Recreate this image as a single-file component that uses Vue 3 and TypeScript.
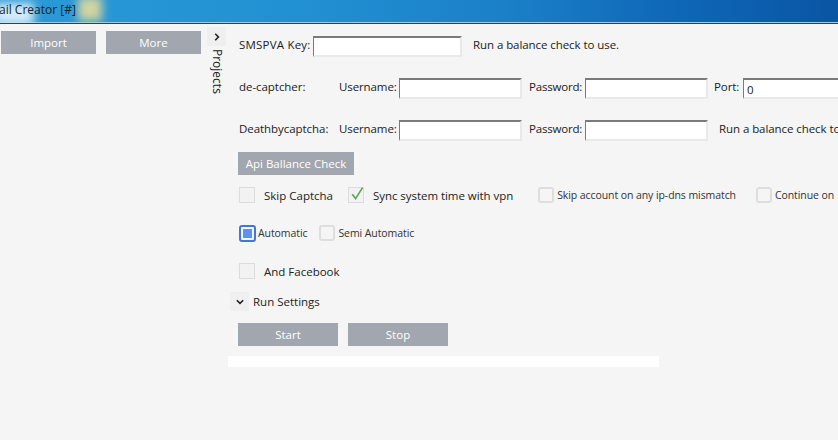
<script setup lang="ts">
const nothing: string[] = []
void nothing
</script>

<template>
  <div class="window">
    <header class="titlebar">
      <span class="glow glow-a"></span>
      <span class="glow glow-b"></span>
      <span class="title">ail Creator [#]</span>
    </header>
    <div class="body">
      <aside class="side">
        <div class="side-buttons">
          <button class="btn side-btn">Import</button>
          <button class="btn side-btn">More</button>
        </div>
      </aside>
      <div class="rail">
        <div class="toggle">
          <svg width="8" height="8" viewBox="0 0 8 8"><path d="M2.2 .8 5.4 4 2.2 7.2" fill="none" stroke="#222" stroke-width="1.6" /></svg>
        </div>
        <span class="vertical">Projects</span>
      </div>
      <main class="main">
        <div class="row row-key">
          <label class="label l-key">SMSPVA Key:</label>
          <span class="field f-key"></span>
          <span class="hint hint-key">Run a balance check to use.</span>
        </div>
        <div class="row row-dc">
          <span class="name">de-captcher:</span>
          <label class="label l-user">Username:</label>
          <span class="field f-mid"></span>
          <label class="label l-pw">Password:</label>
          <span class="field f-mid"></span>
          <label class="label l-port">Port:</label>
          <span class="field f-port">0</span>
        </div>
        <div class="row row-dbc">
          <span class="name">Deathbycaptcha:</span>
          <label class="label l-user">Username:</label>
          <span class="field f-mid"></span>
          <label class="label l-pw">Password:</label>
          <span class="field f-mid"></span>
          <span class="hint hint-dbc">Run a balance check to use.</span>
        </div>
        <button class="btn api">Api Ballance Check</button>
        <div class="row row-checks">
          <span class="box"></span>
          <span class="check-label first">Skip Captcha</span>
          <span class="box box-sync">
            <svg width="16" height="16" viewBox="0 0 16 16"><path d="M3.2 8.2 6.6 12.6 13.6 1.6" fill="none" stroke="#5fa85a" stroke-width="1.7" /></svg>
          </span>
          <span class="check-label first sync-label">Sync system time with vpn</span>
          <span class="box-round skip"></span>
          <span class="small-label">Skip account on any ip-dns mismatch</span>
          <span class="box-round cont"></span>
          <span class="small-label">Continue on</span>
        </div>
        <div class="row row-radio">
          <span class="box-round active"><i></i></span>
          <span class="small-label auto">Automatic</span>
          <span class="box-round semi"></span>
          <span class="small-label">Semi Automatic</span>
        </div>
        <div class="row row-fb">
          <span class="box"></span>
          <span class="check-label first">And Facebook</span>
        </div>
        <div class="row row-run">
          <div class="toggle">
            <svg width="8" height="8" viewBox="0 0 8 8"><path d="M.8 2.2 4 5.4 7.2 2.2" fill="none" stroke="#222" stroke-width="1.6" /></svg>
          </div>
          <span class="run-label">Run Settings</span>
        </div>
        <div class="row row-actions">
          <button class="btn action">Start</button>
          <button class="btn action">Stop</button>
        </div>
        <div class="progress"></div>
      </main>
    </div>
  </div>
</template>

<style>
html, body { margin: 0; background: #f5f5f5; }
</style>

<style scoped>
.window {
  width: 838px;
  height: 440px;
  overflow: hidden;
  background: #f5f5f5;
  font-family: "Open Sans", "Noto Sans", sans-serif;
  font-size: 11.5px;
  color: #222;
}
.titlebar {
  position: relative;
  height: 24px;
  box-sizing: border-box;
  overflow: hidden;
  background: linear-gradient(90deg, #2a9ad8 0%, #2291d3 35%, #1b80c8 60%, #0f68b8 80%, #0a55a4 100%);
  border-bottom: 1px solid #0d4a78;
  box-shadow: inset 0 -1px 0 #9cc9e4;
}
.glow { position: absolute; filter: blur(5px); }
.glow-a { left: -6px; top: 3px; width: 40px; height: 22px; background: #d6ecf8; }
.glow-b { left: 78px; top: -3px; width: 24px; height: 24px; background: #d4d4a0; }
.title {
  position: relative;
  display: block;
  line-height: 20px;
  font-size: 12px;
  color: #14222e;
  white-space: nowrap;
  margin-left: -1px;
}
.body { display: flex; }
.side { width: 207px; flex: none; padding: 7px 0 0 1px; box-sizing: border-box; }
.side-buttons { display: flex; gap: 10px; }
.btn {
  border: 0;
  padding: 0;
  margin: 0;
  background: #a2a6ae;
  color: #fff;
  font: inherit;
  font-size: 11.5px;
  height: 23px;
}
.side-btn { width: 95px; }
.rail { width: 19px; flex: none; display: flex; flex-direction: column; align-items: center; padding-top: 3px; }
.toggle {
  width: 19px;
  height: 19px;
  flex: none;
  background: #efefef;
  display: flex;
  align-items: center;
  justify-content: center;
}
.vertical {
  writing-mode: vertical-rl;
  margin-top: 3px;
  line-height: 16px;
  font-size: 12px;
}
.main { flex: 1; min-width: 0; padding: 12px 0 0 12px; }
.row { display: flex; align-items: center; white-space: nowrap; height: 20px; }
.row-key, .row-dc, .row-dbc { padding-left: 1px; }
.label, .name, .hint { margin-bottom: 3px; flex: none; }
.hint { letter-spacing: -0.07px; }
.label { margin-right: 2px; }
.l-key { width: 72px; letter-spacing: 0.2px; }
.l-user { width: 58px; letter-spacing: -0.1px; }
.l-pw { width: 54px; margin-left: 7px; letter-spacing: -0.2px; }
.l-port { width: 26px; margin-left: 6px; margin-right: 3px; letter-spacing: -0.1px; }
.name { letter-spacing: -0.05px; }
.field {
  display: block;
  box-sizing: border-box;
  height: 21px;
  background: #fff;
  border: 2px solid #e9e9e9;
  border-top-color: #7a7a7a;
  border-left-color: #7a7a7a;
  border-left-width: 1px;
  flex: none;
  line-height: 20px;
  padding-left: 3px;
}
.f-key { width: 149px; }
.f-mid { width: 123px; }
.f-port { width: 120px; }
.hint-key { margin-left: 11px; }
.hint-dbc { margin-left: 11px; }
.name { width: 100px; }
.row-dc { margin-top: 22px; }
.row-dbc { margin-top: 22px; }
.api { display: block; width: 116px; margin-top: 12px; }
.row-checks { margin-top: 10px; height: 20px; padding-left: 1px; }
.box {
  width: 16px;
  height: 16px;
  box-sizing: border-box;
  flex: none;
  background: #f2f2f2;
  border: 1px solid #dcdcdc;
}
.box-sync { margin-left: 15px; position: relative; }
.box-sync svg { position: absolute; left: 0; top: -2px; }
.first { margin-left: 9px; }
.sync-label { letter-spacing: -0.05px; }
.box-round {
  width: 16px;
  height: 16px;
  box-sizing: border-box;
  flex: none;
  border: 2px solid #dedede;
  border-radius: 3px;
  background: #f5f5f5;
}
.skip { margin-left: 25px; margin-right: 3px; }
.cont { margin-left: 20px; margin-right: 3px; }
.small-label { font-size: 10.5px; color: #333; letter-spacing: -0.08px; }
.row-radio { margin-top: 18px; padding-left: 1px; }
.active {
  width: 17px;
  height: 17px;
  border-color: #3f78d8;
  display: flex;
  align-items: center;
  justify-content: center;
}
.active i { display: block; width: 9px; height: 9px; background: #5d93ea; }
.auto { margin-left: 2px; }
.semi { margin-left: 12px; margin-right: 3px; }
.row-fb { margin-top: 18px; padding-left: 1px; }
.row-run { margin-top: 11px; height: 19px; margin-left: -8px; }
.run-label { margin-left: 4px; }
.row-actions { margin-top: 12px; height: 23px; gap: 10px; }
.action { width: 100px; }
.progress { height: 11px; width: 431px; background: #fff; margin: 10px 0 0 -10px; }
</style>
